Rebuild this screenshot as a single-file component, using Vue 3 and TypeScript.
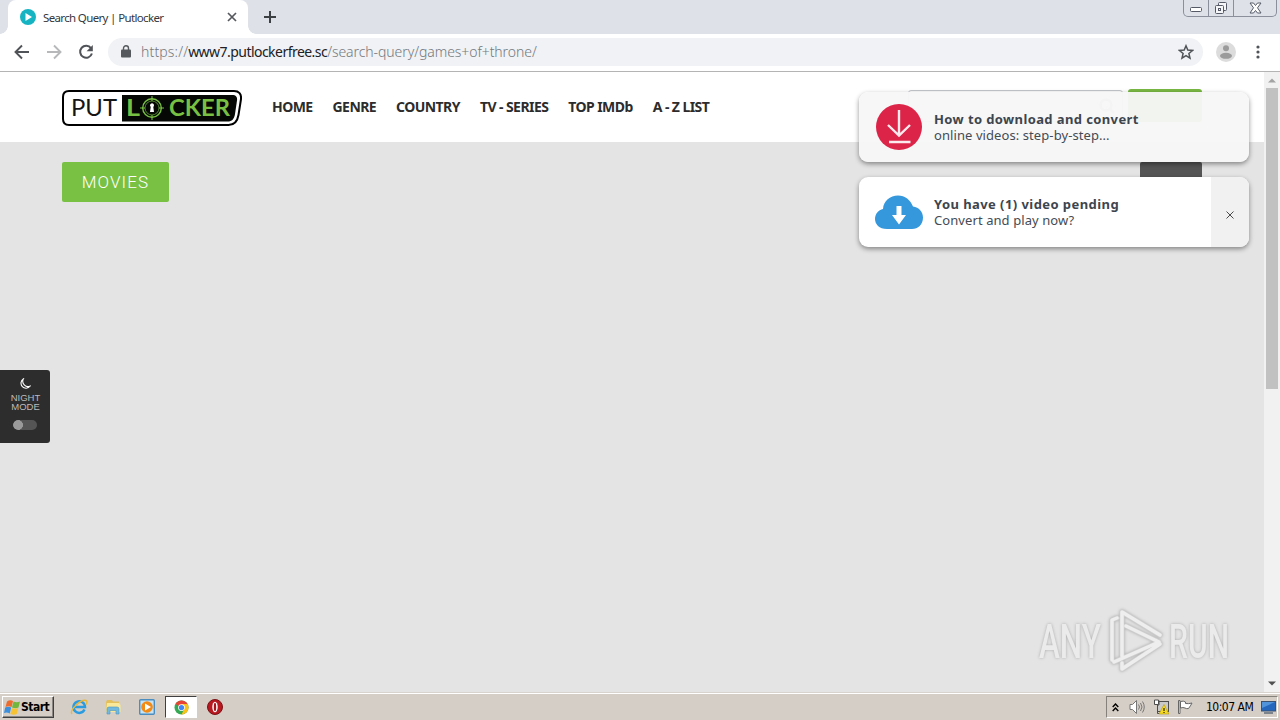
<template>
  <div class="screen">
    <div class="tab-strip">
      <div class="tab">
        <svg class="favicon" width="16" height="16" viewBox="0 0 16 16">
          <circle cx="8" cy="8" r="8" fill="#16b4c3" />
          <path d="M5.500 4 12 8l-6.500 4z" fill="#fff" />
        </svg>
        <span class="tab-title">Search Query | Putlocker</span>
        <svg width="10" height="10" viewBox="0 0 10 10" stroke="#55585d" stroke-width="1.700">
          <path d="M1 1l8 8M9 1L1 9" />
        </svg>
      </div>
      <svg class="new-tab" width="12" height="12" viewBox="0 0 12 12" stroke="#3c4043" stroke-width="2">
        <path d="M6 0v12M0 6h12" />
      </svg>
      <div class="window-controls">
        <span class="control minimize">
          <svg width="13" height="6" viewBox="0 0 13 6"><rect x=".5" y=".5" width="11" height="4" rx="1" fill="#fff" stroke="#555a66" /></svg>
        </span>
        <span class="control restore">
          <svg width="14" height="14" viewBox="0 0 14 14" fill="#f5f6f8" stroke="#555a66">
            <rect x="4.500" y="1.500" width="8" height="8" rx="1" />
            <rect x="1.500" y="4.500" width="8" height="8" rx="1" />
            <rect x="4.500" y="7.500" width="2" height="2" />
          </svg>
        </span>
        <span class="control close">
          <svg width="13" height="12" viewBox="0 0 13 12" fill="#fff" stroke="#555a66">
            <path d="M1 1h3.500l2 2.500 2-2.500H12L8.500 5.800 12 11H8.500l-2-2.500-2 2.500H1l3.500-5.200z" />
          </svg>
        </span>
      </div>
    </div>

    <div class="toolbar">
      <svg class="nav-icon" width="16" height="16" viewBox="0 0 16 16" fill="none" stroke="#505357" stroke-width="1.900">
        <path d="M15 8H2M8 1.500L1.500 8 8 14.500" />
      </svg>
      <svg class="nav-icon" width="16" height="16" viewBox="0 0 16 16" fill="none" stroke="#b6b8ba" stroke-width="1.900">
        <path d="M1 8h13M8 1.500L14.500 8 8 14.500" />
      </svg>
      <svg class="nav-icon" width="16" height="16" viewBox="0 0 16 16">
        <path d="M13 4.200A6 6 0 1 0 13.900 9.500" fill="none" stroke="#505357" stroke-width="2" />
        <path d="M14.800 1v6.200H8.600z" fill="#505357" />
      </svg>
      <div class="address-bar">
        <svg width="10" height="13" viewBox="0 0 10 13">
          <rect x="0" y="4.500" width="10" height="8" rx="1" fill="#55585c" />
          <path d="M2.500 5V3.300a2.500 2.500 0 0 1 5 0V5" fill="none" stroke="#55585c" stroke-width="1.400" />
        </svg>
        <span class="url"><span class="scheme">https://</span><b>www7.putlockerfree.sc</b>/search-query/games+of+throne/</span>
        <svg class="star" width="16" height="16" viewBox="0 0 16 16" fill="none" stroke="#505357" stroke-width="1.500">
          <path d="M8 1.800l1.800 4.300 4.700.4-3.600 3 1.100 4.600L8 11.700l-4 2.400 1.100-4.600-3.600-3 4.700-.4z" />
        </svg>
      </div>
      <svg class="avatar" width="20" height="20" viewBox="0 0 20 20">
        <circle cx="10" cy="10" r="10" fill="#dcdcdc" />
        <circle cx="10" cy="6.200" r="3" fill="#9b9b9b" />
        <ellipse cx="10" cy="13.800" rx="6" ry="3" fill="#9b9b9b" />
      </svg>
      <svg class="menu-dots" width="4" height="14" viewBox="0 0 4 14" fill="#505357">
        <circle v-for="y in [2, 7, 12]" :key="y" cx="2" :cy="y" r="1.600" />
      </svg>
    </div>

    <div class="viewport">
      <div class="page">
        <header class="site-header">
          <svg class="logo" width="180" height="36" viewBox="0 0 180 36">
            <path d="M7 1h165c5 0 7.500 3 7 8l-2.500 16c-1.200 7-4 10-10 10H7c-4 0-6-2-6-6V7c0-4 2-6 6-6z" fill="#fff" stroke="#000" stroke-width="2" />
            <path d="M60 5h110c4 0 5.500 2 5 5.500l-2 13.500c-.8 5-3 7.500-7.500 7.500H60z" fill="#050805" />
            <text class="logo-put" x="9" y="26" textLength="46" lengthAdjust="spacingAndGlyphs">PUT</text>
            <text class="logo-locker" x="64" y="26" textLength="14" lengthAdjust="spacingAndGlyphs">L</text>
            <text class="logo-locker" x="107" y="26" textLength="61" lengthAdjust="spacingAndGlyphs">CKER</text>
            <circle cx="90" cy="18" r="9.300" fill="none" stroke="#78c043" stroke-width="1.400" />
            <circle cx="90" cy="18" r="7" fill="none" stroke="#4f832c" stroke-width="1" />
            <path d="M90 6v5M90 25v5M78 18h5M97 18h5" stroke="#78c043" />
            <path d="M88 15.500a2 2 0 1 1 3.300 1.400l.7 5.100h-4l.7-5.100z" fill="#fff" />
          </svg>
          <nav class="site-nav">
            <a v-for="item in navItems" :key="item">{{ item }}</a>
          </nav>
          <div class="search">
            <svg width="16" height="16" viewBox="0 0 16 16" fill="none" stroke="#aaa" stroke-width="2.500">
              <circle cx="7" cy="7" r="5.500" /><path d="M11 11l4 4" />
            </svg>
          </div>
          <div class="login"></div>
        </header>
        <div class="section-bar">
          <h2 class="section-title">MOVIES</h2>
          <div class="filter"></div>
        </div>

        <div class="night-mode">
          <svg width="12" height="12" viewBox="0 0 12 12" fill="none" stroke="#fff" stroke-width="1.100">
            <path d="M4.300 1A5 5 0 1 0 11 8.200 5.300 5.300 0 0 1 4.300 1z" />
          </svg>
          <span>NIGHT<br />MODE</span>
          <i class="toggle"></i>
        </div>

        <svg class="watermark" width="204" height="72" viewBox="0 0 204 72">
          <path class="watermark-shade" :d="watermark" />
          <path class="watermark-face" :d="watermark" />
          <text x="5" y="54" textLength="62" lengthAdjust="spacingAndGlyphs">ANY</text>
          <text x="135" y="54" textLength="60" lengthAdjust="spacingAndGlyphs">RUN</text>
        </svg>
      </div>

      <div class="scrollbar">
        <svg width="8" height="5" viewBox="0 0 8 5"><path d="M0 4.500L4 .5l4 4z" fill="#a3a3a3" /></svg>
        <div class="thumb"></div>
        <svg class="scroll-down" width="8" height="5" viewBox="0 0 8 5"><path d="M0 .5l4 4 4-4z" fill="#505050" /></svg>
      </div>
    </div>

    <div class="notices">
      <div class="notice faded">
        <svg width="48" height="48" viewBox="0 0 48 48">
          <circle cx="24" cy="24" r="23" fill="#dc2348" />
          <path d="M24 7v25M13 22l11 10.500L35 22M14 39h21.500" fill="none" stroke="#fbe9ed" stroke-width="2.400" />
        </svg>
        <div class="notice-text">
          <strong class="download-title">How to download and convert</strong>
          <span>online videos: step-by-step...</span>
        </div>
      </div>
      <div class="notice">
        <svg width="48" height="48" viewBox="0 0 48 48">
          <path d="M12 41C4 41 0 36 0 31c0-5 3.500-9.200 8-10C8.500 13 15 7.500 23 7.500c7 0 12.500 4.500 15 11C44 19 48 24 48 29.500c0 7-5 11.500-11 11.500z" fill="#3598dc" />
          <path d="M21.500 18h5v9h4.500L24 36.500 17 27h4.500z" fill="#fff" />
        </svg>
        <div class="notice-text">
          <strong class="pending-title">You have (1) video pending</strong>
          <span>Convert and play now?</span>
        </div>
        <div class="notice-close">
          <svg width="8" height="8" viewBox="0 0 8 8" stroke="#4b4b4b"><path d="M.5.5l7 7M7.500.5l-7 7" /></svg>
        </div>
      </div>
    </div>

    <div class="taskbar">
      <div class="start">
        <svg width="17" height="17" viewBox="0 0 17 17">
          <path d="M3 2.500q3-2 6-.5L7.600 8Q4.500 6.500 1.500 8z" fill="#ed6b2d" />
          <path d="M9.500 2.500q3 1.500 6.500 0L14.500 8.500q-3 1.500-6.500 0z" fill="#73b63d" />
          <path d="M1.200 8.500q3-1.500 6 0l-1.500 6Q3 13 0 14z" fill="#3c8fdc" />
          <path d="M7.700 9q3 1.500 6.500 0l-1.500 6q-3 1.500-6.300 0z" fill="#f7c332" />
        </svg>
        <span>Start</span>
      </div>
      <div class="launchers">
        <span class="launcher">
          <svg width="18" height="18" viewBox="0 0 18 18" fill="none">
            <path d="M14.500 11.500A5.800 5.800 0 1 1 15 9H4" stroke="#2b9be0" stroke-width="2.500" />
            <path d="M2 16C-1 12 11 1 16 2.500c1.500.5 1 2.500 0 4" stroke="#e9b83a" stroke-width="1.400" />
          </svg>
        </span>
        <span class="launcher">
          <svg width="18" height="18" viewBox="0 0 18 18">
            <path d="M2 4l1-2h5l1 1.500h6V14H2z" fill="#e3c05c" />
            <path d="M3 5h12l1.500 2v7H2z" fill="#f9e79a" />
            <path d="M3 16v-5q0-2 2-2h8q2 0 2 2v5h-3v-3.500H6V16z" fill="#71b9df" stroke="#4b95c0" stroke-width=".6" />
          </svg>
        </span>
        <span class="launcher">
          <svg width="16" height="16" viewBox="0 0 16 16">
            <rect x=".7" y=".7" width="14.600" height="14.600" rx="1" fill="#c5e3f6" stroke="#4a8dbe" stroke-width="1.400" />
            <circle cx="8" cy="8" r="5.800" fill="#f28a16" />
            <path d="M6 4.500L12 8l-6 3.500z" fill="#fff" />
          </svg>
        </span>
        <span class="launcher active">
          <svg width="15" height="15" viewBox="0 0 16 16">
            <circle cx="8" cy="8" r="7.500" fill="#35a853" />
            <path d="M8 8L1.500 4.300A7.500 7.500 0 0 1 14.500 4.300z" fill="#ea4335" />
            <path d="M14.500 4.300A7.500 7.500 0 0 1 8 15.500L11.200 9 8 4.300z" fill="#fbc116" />
            <circle cx="8" cy="8" r="3.600" fill="#fff" />
            <circle cx="8" cy="8" r="2.800" fill="#4285f4" />
          </svg>
        </span>
        <span class="launcher">
          <svg width="16" height="16" viewBox="0 0 16 16">
            <circle cx="8" cy="8" r="7.500" fill="#b81820" stroke="#7b1216" />
            <ellipse cx="8" cy="8" rx="2.700" ry="5.300" fill="#fff" />
            <ellipse cx="8" cy="8" rx="1.200" ry="4.300" fill="#a5141b" />
          </svg>
        </span>
      </div>
      <div class="tray">
        <svg width="7" height="9" viewBox="0 0 7 9" fill="none" stroke="#000" stroke-width="1.400">
          <path d="M.7 4l2.800-3 2.800 3M.7 8l2.800-3 2.800 3" />
        </svg>
        <svg class="volume" width="16" height="16" viewBox="0 0 16 16" fill="none" stroke="#777">
          <path d="M1 5.500h2.500L7.500 1.500v13l-4-4H1z" fill="#fff" />
          <path d="M9.500 5.500q2 2.500 0 5M11.500 4q3 4 0 8M13.500 2.500q3.500 5.500 0 11" />
        </svg>
        <svg class="network" width="16" height="16" viewBox="0 0 16 16">
          <rect x="4.500" y="2.500" width="11" height="10" fill="#c9c9c9" stroke="#4d4d4d" />
          <path d="M1 1.500h5V6H4.500v8.500H9" fill="none" stroke="#4d4d4d" />
          <path d="M1.500 1v4.500h4V1z" fill="#fff" stroke="#4d4d4d" />
          <path d="M11 5.500l5 9.500H6z" fill="#f7da20" stroke="#b3980e" stroke-width=".6" />
          <path d="M11 9v3M11 13v1" stroke="#222" stroke-width="1.200" />
        </svg>
        <svg class="flag" width="16" height="16" viewBox="0 0 16 16" fill="#fff" stroke="#666">
          <path d="M1.500 1.500v13h1.500v-13zM3.500 2.500q3-1 5 .5v1.500q3 .5 6.500-.5-1.500 3-3.500 5.500-2 .5-3.500-.5-2-1-4.500 0z" />
        </svg>
        <span class="clock">10:07 AM</span>
        <svg class="desktop" width="15" height="13" viewBox="0 0 15 13">
          <rect x=".5" y=".5" width="14" height="9.500" fill="#2467bd" stroke="#3b5270" />
          <path d="M1 1h13L1 7z" fill="#5294dc" />
          <path d="M3 12h9" stroke="#5f6b79" stroke-width="1.500" />
        </svg>
      </div>
    </div>
  </div>
</template>

<script setup lang="ts">
const navItems: string[] = ['HOME', 'GENRE', 'COUNTRY', 'TV - SERIES', 'TOP IMDb', 'A - Z LIST'];

const watermark = 'M83 14l-5 2v40M88 52V8l38 23M80 58l45-20-33-16M88 59v6l38-25';
</script>

<style>
body {
  margin: 0;
  overflow: hidden;
}
</style>

<style scoped>
.screen {
  position: relative;
  display: flex;
  flex-direction: column;
  width: 1280px;
  height: 720px;
  overflow: hidden;
  background: #fff;
  font-family: "Noto Sans", sans-serif;
}

svg {
  display: block;
  flex-shrink: 0;
}

/* Browser chrome */
.tab-strip {
  display: flex;
  height: 34px;
  background: #dee1e8;
}

.tab {
  position: relative;
  display: flex;
  align-items: center;
  box-sizing: border-box;
  width: 240px;
  margin-left: 8px;
  padding: 0 11px 0 12px;
  background: #fff;
  border-radius: 8px 8px 0 0;
}

.tab::before,
.tab::after {
  position: absolute;
  bottom: 0;
  width: 8px;
  height: 8px;
  content: "";
}

.tab::before {
  left: -8px;
  background: radial-gradient(circle at 0 0, transparent 7.5px, #fff 8px);
}

.tab::after {
  right: -8px;
  background: radial-gradient(circle at 100% 0, transparent 7.5px, #fff 8px);
}

.tab-title {
  flex: 1;
  margin-left: 7px;
  color: #35383c;
  font-size: 11.5px;
  letter-spacing: -0.65px;
}

.new-tab {
  margin: 11px 0 0 16px;
}

.window-controls {
  display: flex;
  box-sizing: border-box;
  width: 94px;
  height: 17px;
  margin: 0 3px 0 auto;
  border: 1px solid #8a8f9b;
  border-top: 0;
  border-radius: 0 0 5px 5px;
}

.control {
  display: flex;
  align-items: center;
  justify-content: center;
  border-right: 1px solid #8a8f9b;
}

.minimize {
  width: 24px;
  padding-top: 4px;
}

.restore {
  width: 24px;
}

.close {
  flex: 1;
  border: 0;
}

.toolbar {
  display: flex;
  align-items: center;
  box-sizing: border-box;
  height: 38px;
  padding: 0 20px 1px 14px;
  border-bottom: 1px solid #b4b4b4;
}

.nav-icon {
  margin-right: 16px;
}

.address-bar {
  display: flex;
  align-items: center;
  box-sizing: border-box;
  width: 1095px;
  height: 28px;
  margin: -1px 13px 0 -2px;
  padding: 0 9px 0 13px;
  border-radius: 14px;
  background: #f0f2f5;
}

.url {
  margin-left: 10px;
  color: #74787c;
  font-size: 14px;
  font-weight: 300;
  white-space: nowrap;
  letter-spacing: -0.07px;
}

.scheme {
  letter-spacing: 0.15px;
}

.url b {
  color: #202124;
  font-weight: 400;
  letter-spacing: -0.54px;
}

.star {
  margin-left: auto;
}

.menu-dots {
  margin-left: auto;
}

/* Web page */
.viewport {
  display: flex;
  height: 620px;
}

.page {
  position: relative;
  width: 1264px;
  background: #e4e4e4;
}

.site-header {
  display: flex;
  box-sizing: border-box;
  height: 70px;
  padding: 18px 62px 0;
  background: #fff;
}

.logo-put {
  fill: #151515;
  font: 400 23px "Lato", sans-serif;
}

.logo-locker {
  fill: #78c043;
  font: 700 23px "Lato", sans-serif;
}

.site-nav {
  display: flex;
  gap: 20px;
  margin: 7px 0 0 30px;
  color: #2c2c2c;
  font-size: 14px;
  font-weight: 700;
  line-height: 20px;
  letter-spacing: -0.57px;
  white-space: nowrap;
}

.search {
  display: flex;
  align-items: center;
  justify-content: flex-end;
  box-sizing: border-box;
  width: 215px;
  height: 32px;
  margin-left: auto;
  padding-right: 7px;
  border: 1px solid #c3c7cc;
  border-radius: 3px;
}

.login {
  width: 74px;
  height: 33px;
  margin: -1px 0 0 5px;
  border-radius: 3px;
  background: #79b843;
}

.section-bar {
  display: flex;
  justify-content: space-between;
  padding: 20px 62px;
}

.section-title {
  width: 107px;
  height: 40px;
  margin: 0;
  border-radius: 2px;
  background: #79c142;
  color: #fff;
  font: 300 17px/41px "Roboto", "Liberation Sans", sans-serif;
  letter-spacing: 1.1px;
  text-align: center;
}

.filter {
  width: 62px;
  height: 40px;
  border-radius: 2px;
  background: #555;
}

.night-mode {
  position: absolute;
  top: 298px;
  left: 0;
  display: flex;
  flex-direction: column;
  align-items: center;
  box-sizing: border-box;
  width: 50px;
  height: 73px;
  padding-top: 8px;
  border-radius: 0 3px 3px 0;
  background: #2d2d2d;
  color: #bbb;
  font: 9.5px/9px "Liberation Sans", sans-serif;
  text-align: center;
}

.night-mode span {
  margin: 3px 0 9px 1px;
}

.toggle {
  width: 24px;
  height: 10px;
  border-radius: 5px;
  background: radial-gradient(circle at 5px 5px, #9a9a9a 4.7px, #555 5.2px);
}

.watermark {
  position: absolute;
  right: 26px;
  bottom: 16px;
  overflow: visible;
  fill: none;
  stroke-linejoin: round;
  stroke-linecap: round;
  filter: drop-shadow(0 0 1.5px #aaa);
}

.watermark-shade {
  stroke: #cfcfcf;
  stroke-width: 5px;
}

.watermark-face {
  stroke: #eee;
  stroke-width: 3.5px;
}

.watermark text {
  fill: #ebebeb;
  font: 500 49px "Roboto", sans-serif;
}

.scrollbar {
  display: flex;
  flex-direction: column;
  align-items: center;
  box-sizing: border-box;
  width: 16px;
  padding: 6px 0;
  background: #f1f1f1;
}

.thumb {
  width: 12px;
  height: 301px;
  margin-top: 5px;
  background: #c1c1c1;
}

.scroll-down {
  margin-top: auto;
}

/* Notifications over the page */
.notices {
  position: absolute;
  top: 92px;
  left: 859px;
  display: flex;
  flex-direction: column;
  gap: 15px;
  width: 390px;
}

.notice {
  display: flex;
  align-items: center;
  box-sizing: border-box;
  height: 70px;
  padding-left: 16px;
  overflow: hidden;
  border-radius: 9px;
  background: #fff;
  box-shadow: 0 2px 5px rgba(0, 0, 0, 0.42);
}

.faded {
  background: rgba(247, 247, 247, 0.96);
}

.notice-text {
  display: flex;
  flex: 1;
  flex-direction: column;
  margin-left: 11px;
  color: #444b54;
  font-size: 13px;
  line-height: 16px;
  letter-spacing: 0.08px;
  white-space: nowrap;
}

.notice-text strong {
  color: #3d454e;
}

.download-title {
  letter-spacing: 0.39px;
}

.pending-title {
  letter-spacing: 0.43px;
}

.notice-close {
  display: flex;
  align-items: center;
  justify-content: center;
  align-self: stretch;
  width: 38px;
  padding-top: 6px;
  background: #f1f1f1;
}

/* Windows taskbar */
.taskbar {
  display: flex;
  box-sizing: border-box;
  height: 28px;
  padding: 3px 2px 1px;
  border-top: 1px solid #d8d4cd;
  background: #d5cec6;
  box-shadow: inset 0 1px #fff;
}

.start {
  display: flex;
  align-items: center;
  box-sizing: border-box;
  width: 52px;
  height: 22px;
  padding-left: 1px;
  border: 1px solid;
  border-color: #fff #404040 #404040 #fff;
  box-shadow: inset -1px -1px #8b8782;
  color: #000;
  font: 700 12px "DejaVu Sans Condensed", "DejaVu Sans", sans-serif;
  letter-spacing: -0.5px;
}

.launchers {
  display: flex;
  gap: 2px;
  margin-left: 9px;
}

.launcher {
  display: flex;
  align-items: center;
  justify-content: center;
  box-sizing: border-box;
  width: 32px;
  height: 22px;
}

.active {
  border: 1px solid;
  border-color: #404040 #fff #fff #404040;
  background: #fff;
}

.tray {
  display: flex;
  align-items: center;
  box-sizing: border-box;
  width: 172px;
  height: 22px;
  margin-left: auto;
  padding: 0 1px 0 5px;
  border: 1px solid;
  border-color: #85817b #fff #fff #85817b;
}

.volume {
  margin-left: 10px;
}

.network,
.flag {
  margin-left: 8px;
}

.clock {
  flex: 1;
  margin-left: 13px;
  color: #000;
  font: 12px "DejaVu Sans Condensed", "DejaVu Sans", sans-serif;
  letter-spacing: -0.5px;
  white-space: nowrap;
}
</style>
